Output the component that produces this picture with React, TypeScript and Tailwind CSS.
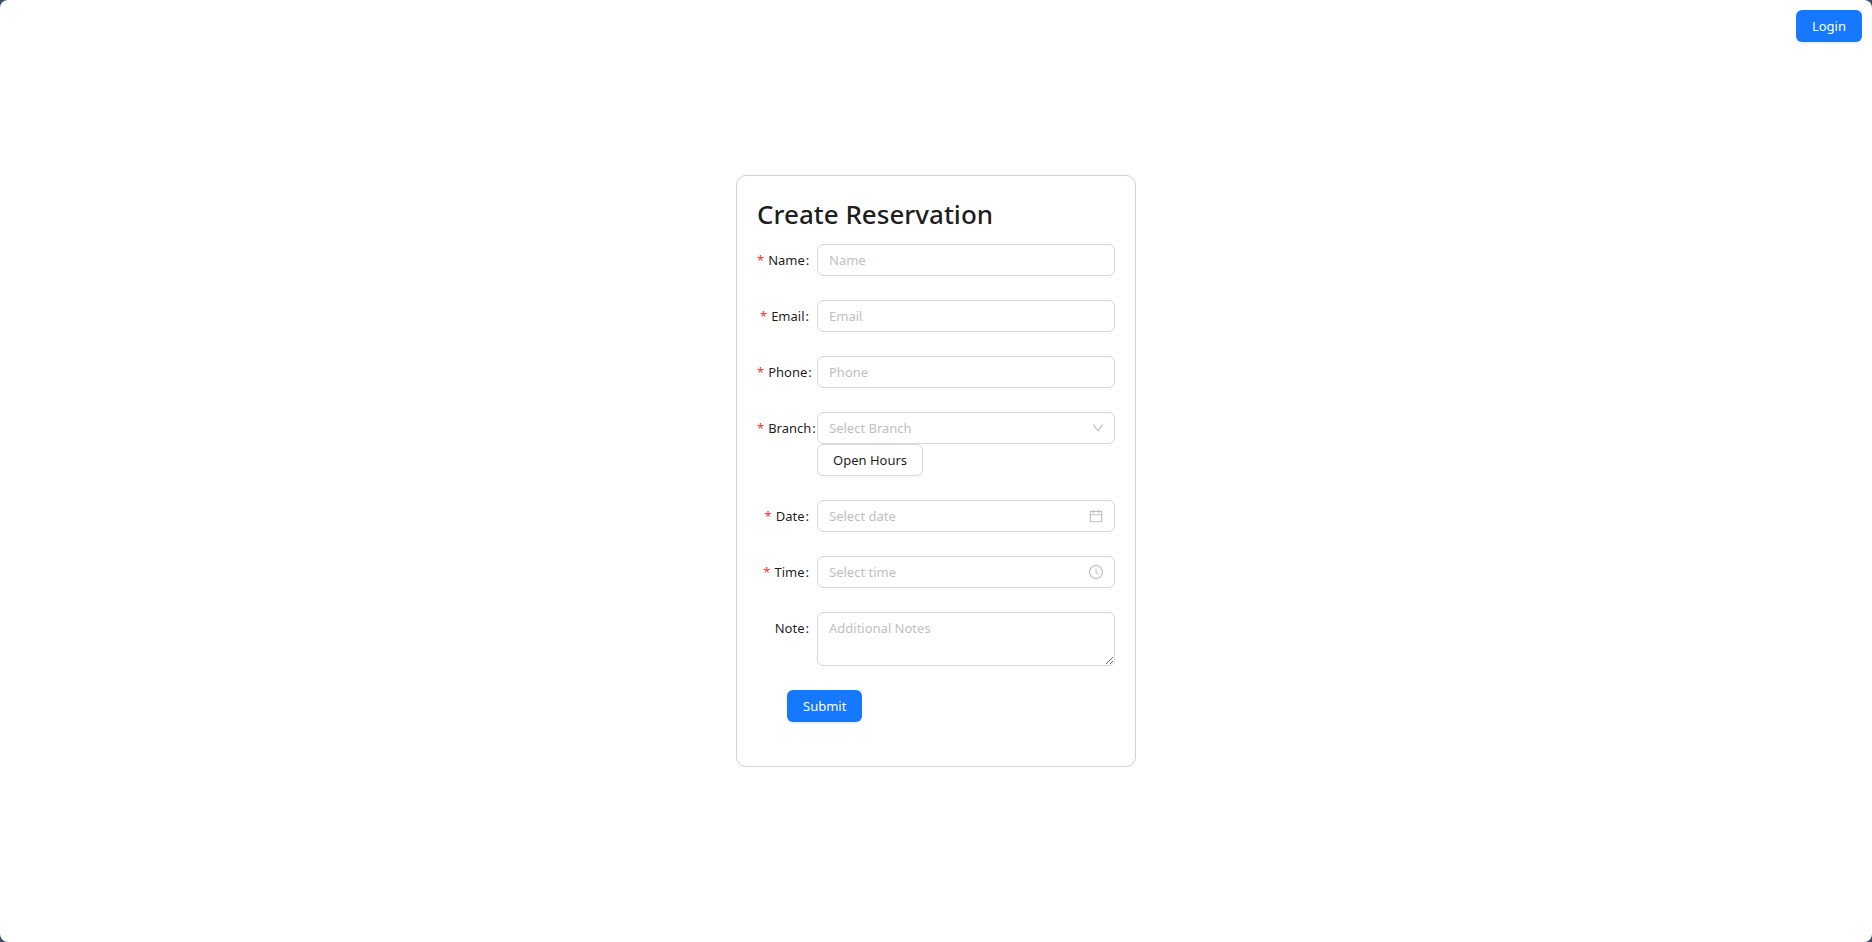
import type { ReactNode } from "react";
import { AiOutlineCalendar, AiOutlineClockCircle, AiOutlineDown } from "react-icons/ai";

const control =
  "block h-8 w-full rounded-md border border-[#d9d9d9] bg-white px-[11px] text-[13px] leading-[22px] text-black/90 placeholder:text-[#bfbfbf] outline-none focus:border-[#1677ff]";

const primaryButton =
  "h-8 rounded-md bg-[#1677ff] px-4 text-[13px] leading-[22px] text-white shadow-[0_2px_0_rgba(5,145,255,0.1)] hover:bg-[#4096ff]";

type FieldProps = {
  id: string;
  label: string;
  required?: boolean;
  children: ReactNode;
};

function Field({ id, label, required = false, children }: FieldProps) {
  return (
    <div className="mb-6 grid grid-cols-[60px_minmax(0,1fr)]">
      <div className="h-8 text-right text-[13px] leading-8 whitespace-nowrap">
        <label htmlFor={id}>
          {required && <span className="mr-1 text-[#ff3336]">*</span>}
          {label}
          <span className="mr-2 ml-px">:</span>
        </label>
      </div>
      <div>{children}</div>
    </div>
  );
}

function WithIcon({ icon, children }: { icon: ReactNode; children: ReactNode }) {
  return (
    <div className="relative">
      {children}
      <span className="pointer-events-none absolute inset-y-0 right-0 flex w-[38px] items-center justify-center text-[#bfbfbf]">
        {icon}
      </span>
    </div>
  );
}

export default function App() {
  return (
    <div className="min-h-screen bg-[#3d4d66]">
      <div className="grid min-h-screen grid-rows-[1fr_auto_1fr] rounded-lg bg-white font-['Noto_Sans',sans-serif] text-black/90">
        <header className="flex items-start justify-end p-2.5">
          <button type="button" className={primaryButton}>
            Login
          </button>
        </header>

        <main className="flex justify-center">
          <form
            className="w-full max-w-[400px] rounded-[10px] border border-[#d3d3d3] p-5"
            onSubmit={(event) => event.preventDefault()}
          >
            <h1 className="mb-3 text-[26px] leading-9 font-medium whitespace-nowrap">
              Create Reservation
            </h1>

            <Field id="name" label="Name" required>
              <input id="name" type="text" placeholder="Name" className={control} />
            </Field>
            <Field id="email" label="Email" required>
              <input id="email" type="email" placeholder="Email" className={control} />
            </Field>
            <Field id="phone" label="Phone" required>
              <input id="phone" type="tel" placeholder="Phone" className={control} />
            </Field>
            <Field id="branch" label="Branch" required>
              <WithIcon icon={<AiOutlineDown size={14} className="ml-1" />}>
                <select
                  id="branch"
                  defaultValue=""
                  className="block h-8 w-full appearance-none rounded-md border border-[#d9d9d9] bg-white px-[11px] text-[13px] leading-[22px] text-[#bfbfbf] outline-none focus:border-[#1677ff]"
                >
                  <option value="">Select Branch</option>
                </select>
              </WithIcon>
              <button
                type="button"
                className="block h-8 rounded-md border border-[#d9d9d9] bg-white px-[15px] text-[13px] leading-[22px] shadow-[0_2px_0_rgba(0,0,0,0.02)] hover:border-[#4096ff] hover:text-[#4096ff]"
              >
                Open Hours
              </button>
            </Field>
            <Field id="date" label="Date" required>
              <WithIcon icon={<AiOutlineCalendar size={16} />}>
                <input id="date" type="text" placeholder="Select date" className={control} />
              </WithIcon>
            </Field>
            <Field id="time" label="Time" required>
              <WithIcon icon={<AiOutlineClockCircle size={16} />}>
                <input id="time" type="text" placeholder="Select time" className={control} />
              </WithIcon>
            </Field>
            <Field id="note" label="Note">
              <textarea
                id="note"
                rows={2}
                placeholder="Additional Notes"
                className="block h-[54px] w-full resize-y rounded-md border border-[#d9d9d9] bg-white px-[11px] py-1 text-[13px] leading-[22px] placeholder:text-[#bfbfbf] outline-none focus:border-[#1677ff]"
              />
            </Field>

            <div className="mb-6 flex pl-[30px]">
              <button type="submit" className={primaryButton}>
                Submit
              </button>
            </div>
          </form>
        </main>
      </div>
    </div>
  );
}
